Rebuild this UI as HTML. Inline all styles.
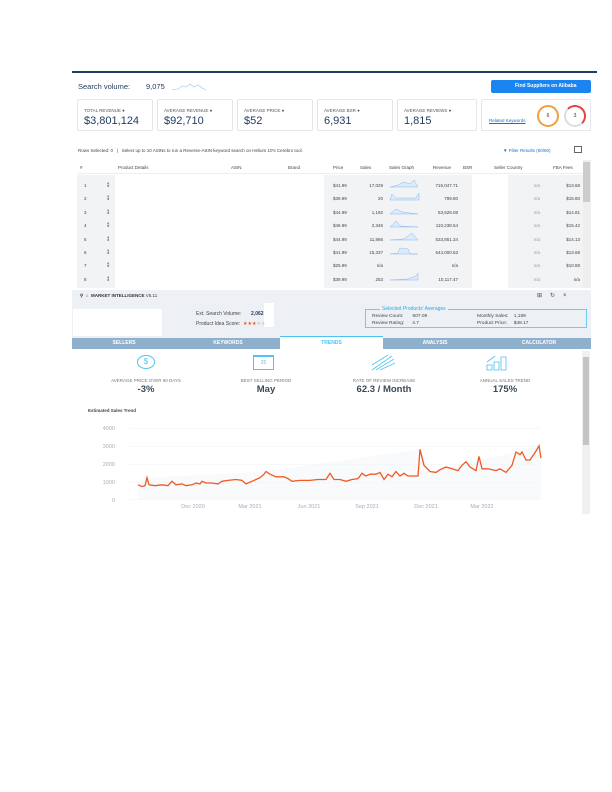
<!DOCTYPE html>
<html><head><meta charset="utf-8"><style>
*{margin:0;padding:0;box-sizing:border-box}
body{width:612px;height:792px;background:#fff;font-family:"Liberation Sans",sans-serif;position:relative;overflow:hidden;color:#333}
.a{position:absolute}
.card{position:absolute;top:99px;height:32px;border:1px solid #e3e6ea;border-radius:2px;background:#fff}
.card .l{position:absolute;left:6px;top:8px;font-size:4.5px;color:#555}
.card .v{position:absolute;left:6px;top:15px;font-size:11px;color:#1d3a5f}
.t{position:absolute;font-size:4.5px;color:#444}
</style></head><body>
<div class="a" style="left:72px;top:71px;width:525px;height:1.5px;background:#1f3b66"></div>
<div class="a" style="left:78px;top:82px;font-size:7.5px;color:#1d3a5f">Search volume:</div>
<div class="a" style="left:146px;top:82px;font-size:7.5px;color:#1d3a5f">9,075</div>
<svg class="a" style="left:172px;top:82px" width="40" height="9"><path d="M0 8 L6 7 L10 4 L14 5 L18 2 L22 5 L26 3 L30 6 L34 8" fill="none" stroke="#b8d4f0" stroke-width=".8"/></svg>
<div class="a" style="left:491px;top:80px;width:100px;height:13px;background:#1a84f0;border-radius:2px;color:#fff;font-size:5px;font-weight:bold;line-height:13px;padding-left:24px">Find Suppliers on Alibaba</div>
<div class="card" style="left:77px;width:76px"><div class="l">TOTAL REVENUE ●</div><div class="v">$3,801,124</div></div>
<div class="card" style="left:157px;width:76px"><div class="l">AVERAGE REVENUE ●</div><div class="v">$92,710</div></div>
<div class="card" style="left:237px;width:76px"><div class="l">AVERAGE PRICE ●</div><div class="v">$52</div></div>
<div class="card" style="left:317px;width:76px"><div class="l">AVERAGE BSR ●</div><div class="v">6,931</div></div>
<div class="card" style="left:397px;width:80px"><div class="l">AVERAGE REVIEWS ●</div><div class="v">1,815</div></div>
<div class="card" style="left:481px;width:110px"><div class="a" style="left:7px;top:18px;font-size:4.5px;color:#1a6fd0;text-decoration:underline">Related Keywords</div>
<div class="a" style="left:55px;top:5px;width:22px;height:22px;border-radius:50%;border:2px solid #f0a040;font-size:5px;text-align:center;line-height:18px">6</div>
<div class="a" style="left:82px;top:5px;width:22px;height:22px;border-radius:50%;border:2px solid #ddd;border-top-color:#e84040;border-right-color:#e84040;font-size:5px;text-align:center;line-height:18px">3</div></div>
<div class="t" style="left:78px;top:148px">Rows Selected: 0 &nbsp; | &nbsp; Select up to 10 ASINs to run a Reverse-ASIN keyword search on Helium 10's Cerebro tool.</div>
<div class="t" style="left:503px;top:148px;color:#1a6fd0">▼ Filter Results (60/60)</div>
<div class="a" style="left:574px;top:146px;width:8px;height:7px;border:1px solid #666"></div>
<div class="a" style="left:77px;top:160px;width:506px;height:14px;background:#fff;border-bottom:1px solid #eee"></div>
<div class="t" style="left:80px;top:165px">#</div><div class="t" style="left:118px;top:165px">Product Details</div><div class="t" style="left:231px;top:165px">ASIN</div><div class="t" style="left:288px;top:165px">Brand</div><div class="t" style="left:333px;top:165px">Price</div><div class="t" style="left:360px;top:165px">Sales</div><div class="t" style="left:389px;top:165px">Sales Graph</div><div class="t" style="left:433px;top:165px">Revenue</div><div class="t" style="left:463px;top:165px">BSR</div><div class="t" style="left:494px;top:165px">Seller Country</div><div class="t" style="left:553px;top:165px">FBA Fees</div>
<div class="a" style="left:77px;top:175px;width:506px;height:113px;background:#f2f3f5"></div>
<div class="a" style="left:115px;top:175px;width:209px;height:113px;background:#fff"></div>
<div class="a" style="left:472px;top:175px;width:36px;height:113px;background:#fff"></div>
<div class="a" style="left:583px;top:160px;width:8px;height:128px;background:#eee"></div>
<div class="a" style="left:583px;top:162px;width:7px;height:40px;background:#ccc"></div>
<div class="t" style="left:84px;top:179px;line-height:13.4px">1<br>2<br>3<br>4<br>5<br>6<br>7<br>8</div>
<div class="t" style="left:107px;top:179px;line-height:13.4px">⁑<br>⁑<br>⁑<br>⁑<br>⁑<br>⁑<br>⁑<br>⁑</div>
<div class="t" style="left:333px;top:179px;line-height:13.4px">$41.99<br>$39.99<br>$44.99<br>$46.99<br>$44.99<br>$41.99<br>$25.99<br>$39.99</div>
<div class="t" style="left:357px;top:179px;width:26px;text-align:right;line-height:13.4px">17,029<br>20<br>1,192<br>2,346<br>11,866<br>15,337<br>n/a<br>253</div>
<div class="t" style="left:424px;top:179px;width:34px;text-align:right;line-height:13.4px">715,047.71<br>799.80<br>53,628.08<br>110,238.54<br>533,851.34<br>644,000.63<br>n/a<br>10,117.47</div>
<div class="t" style="left:525px;top:179px;width:15px;text-align:right;line-height:13.4px;color:#999">n/a<br>n/a<br>n/a<br>n/a<br>n/a<br>n/a<br>n/a<br>n/a</div>
<div class="t" style="left:560px;top:179px;width:20px;text-align:right;line-height:13.4px">$13.68<br>$15.80<br>$14.81<br>$15.42<br>$14.13<br>$13.68<br>$10.88<br>n/a</div>
<svg class="a" style="left:388px;top:176px" width="36" height="108"><g fill="#dcebfb" stroke="#8ab8ec" stroke-width=".5"><path d="M2 11 L10 9 L16 6 L22 8 L26 4 L30 11Z"/><path d="M2 24 L4 18 L8 22 L20 22 L28 22 L31 17 L31 24Z"/><path d="M2 38 L8 33 L14 36 L30 38Z"/><path d="M2 51 L8 45 L12 50 L30 51Z"/><path d="M2 64 L16 63 L24 57 L30 64Z"/><path d="M2 78 L10 77 L12 72 L20 73 L22 78 L30 78Z"/><path d="M2 104 L20 103 L28 100 L30 97 L30 104Z"/></g></svg>
<div class="a" style="left:72px;top:289px;width:519px;height:225px;background:#fff"></div>
<div class="a" style="left:72px;top:290px;width:519px;height:48px;background:#edf1f5"></div>
<div class="a" style="left:80px;top:293px;font-size:4.5px;font-weight:bold;color:#333">⚲ &nbsp;⌂ &nbsp;MARKET INTELLIGENCE <span style="font-weight:normal">V5.11</span></div>
<div class="a" style="left:537px;top:292px;font-size:6px;color:#444;letter-spacing:8px">⊞↻×</div>
<div class="a" style="left:73px;top:309px;width:89px;height:27px;background:#fff"></div>
<div class="a" style="left:264px;top:303px;width:10px;height:24px;background:#fff"></div>
<div class="t" style="left:196px;top:311px;font-size:5px">Ext. Search Volume: &nbsp;&nbsp;&nbsp;&nbsp;&nbsp;&nbsp;<b style="color:#1d3a5f">2,062</b></div>
<div class="t" style="left:196px;top:321px;font-size:5px">Product Idea Score: &nbsp;<span style="color:#ee5a24">★★★</span><span style="color:#ccc">★★</span></div>
<div class="a" style="left:365px;top:309px;width:222px;height:19px;border:1px solid #6ccbee"></div>
<div class="t" style="left:380px;top:306px;background:#edf1f5;color:#2aa8e0;font-size:5px;padding:0 2px">Selected Products' Averages</div>
<div class="t" style="left:372px;top:313px;font-size:4.8px;line-height:7px">Review Count: &nbsp;&nbsp;&nbsp;&nbsp;&nbsp;&nbsp;607.09<br>Review Rating: &nbsp;&nbsp;&nbsp;&nbsp;&nbsp;4.7</div>
<div class="t" style="left:477px;top:313px;font-size:4.8px;line-height:7px">Monthly Sales: &nbsp;&nbsp;&nbsp;1,189<br>Product Price: &nbsp;&nbsp;&nbsp;&nbsp;$48.17</div>
<div class="a" style="left:72px;top:338px;width:519px;height:11px;background:#8fb0cc"></div>
<div class="a" style="left:280px;top:336px;width:103px;height:13px;background:#fff;border-top:1.5px solid #4fc3f0"></div>
<div class="t" style="left:72px;top:340px;width:519px;font-size:5px;font-weight:bold;color:#fff;display:flex"><span style="width:104px;text-align:center">SELLERS</span><span style="width:104px;text-align:center">KEYWORDS</span><span style="width:103px;text-align:center;color:#4fc3f0">TRENDS</span><span style="width:104px;text-align:center">ANALYSIS</span><span style="width:104px;text-align:center">CALCULATOR</span></div>
<div class="a" style="left:582px;top:351px;width:8px;height:163px;background:#f0f0f0"></div>
<div class="a" style="left:583px;top:357px;width:6px;height:88px;background:#c4c4c4"></div>
<div class="a" style="left:137px;top:355px;width:18px;height:14px;border:1.5px solid #4fc3f0;border-radius:50%;color:#4fc3f0;font-size:8px;text-align:center;line-height:11px">$</div>
<div class="a" style="left:253px;top:355px;width:21px;height:15px;border:1px solid #4fc3f0;border-top-width:2px;color:#4fc3f0;font-size:5px;text-align:center;line-height:12px">25</div>
<svg class="a" style="left:370px;top:354px" width="26" height="17"><g stroke="#4fc3f0" stroke-width=".8"><path d="M2 16 L22 2 M6 16 L24 5 M2 11 L18 1 M10 16 L25 9"/></g></svg>
<svg class="a" style="left:486px;top:354px" width="26" height="17"><g fill="none" stroke="#4fc3f0" stroke-width=".8"><rect x="1" y="11" width="5" height="5"/><rect x="8" y="8" width="5" height="8"/><rect x="15" y="3" width="5" height="13"/><path d="M1 8 L9 2"/></g></svg>
<div class="t" style="left:90px;top:378px;width:112px;text-align:center;color:#777">AVERAGE PRICE OVER 90 DAYS</div>
<div class="t" style="left:214px;top:378px;width:104px;text-align:center;color:#777">BEST SELLING PERIOD</div>
<div class="t" style="left:330px;top:378px;width:108px;text-align:center;color:#777">RATE OF REVIEW INCREASE</div>
<div class="t" style="left:450px;top:378px;width:110px;text-align:center;color:#777">ANNUAL SALES TREND</div>
<div class="a" style="left:90px;top:384px;width:112px;text-align:center;font-size:9.5px;font-weight:bold;color:#3a4a5a">-3%</div>
<div class="a" style="left:214px;top:384px;width:104px;text-align:center;font-size:9.5px;font-weight:bold;color:#3a4a5a">May</div>
<div class="a" style="left:330px;top:384px;width:108px;text-align:center;font-size:9.5px;font-weight:bold;color:#3a4a5a">62.3 / Month</div>
<div class="a" style="left:450px;top:384px;width:110px;text-align:center;font-size:9.5px;font-weight:bold;color:#3a4a5a">175%</div>
<div class="t" style="left:88px;top:408px;font-size:4.5px;font-weight:bold;color:#445">Estimated Sales Trend</div>
<svg class="a" style="left:72px;top:420px" width="510" height="95">
<g stroke="#eef0f3" stroke-width=".5"><path d="M58 8.5H468M58 26.5H468M58 44.5H468M58 62.5H468M58 79.5H468"/></g>
<g font-family="Liberation Sans" font-size="5.5" fill="#aab" text-anchor="end"><text x="43" y="10">4000</text><text x="43" y="28">3000</text><text x="43" y="46">2000</text><text x="43" y="64">1000</text><text x="43" y="82">0</text></g>
<g font-family="Liberation Sans" font-size="5.5" fill="#aab" text-anchor="middle"><text x="121" y="88">Dec 2020</text><text x="178" y="88">Mar 2021</text><text x="237" y="88">Jun 2021</text><text x="295" y="88">Sep 2021</text><text x="354" y="88">Dec 2021</text><text x="410" y="88">Mar 2022</text></g>
<g transform="translate(-72,-420)">
<path d="M138 484.8 L147 477.7 L266 471.5 L420 449.3 L430 471.5 L516 452 L539 445.8 L541 458.2 L541 499 L138 499Z" fill="#f3f6fa" opacity=".6"/>
<path d="M138 484.8 L142 486.6 L145 485.7 L147 477.7 L149 484.8 L155 485.7 L162 484.8 L168 485.7 L172 481.3 L176 484.8 L182 483.9 L186 485.7 L192 484.8 L196 483 L200 483.9 L202 481.3 L206 483 L212 483 L218 483.9 L222 481.3 L228 480.4 L236 479.5 L242 480.4 L246 483.9 L252 481.3 L260 477.7 L264 474.2 L266 471.5 L270 474.2 L276 476.8 L284 476.8 L288 478.6 L292 481.3 L300 480.4 L310 480.4 L318 479.5 L326 479.5 L330 473.3 L334 479.5 L340 479.5 L346 481.3 L352 479.5 L358 478.6 L362 473.3 L366 476 L370 474.2 L376 474.2 L380 472.4 L384 479.5 L388 474.2 L392 476.8 L396 471.5 L400 476 L404 473.3 L408 476 L415 476 L418 476 L420 449.3 L424 465.3 L430 471.5 L436 472.4 L440 469.7 L446 467 L452 468.8 L458 470.6 L462 465.3 L466 461.7 L470 467 L476 470.6 L479 456.4 L482 468.8 L488 468.8 L496 470.6 L500 468.8 L506 472.4 L512 465.3 L516 452 L520 454.6 L522 452 L526 460 L530 460 L536 451.1 L539 445.8 L541 458.2" fill="none" stroke="#f05a22" stroke-width="1.3"/>
</g>
</svg>
</body></html>
